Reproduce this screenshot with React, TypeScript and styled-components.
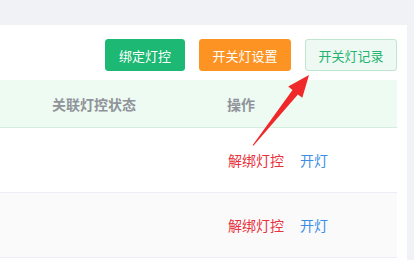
import styled, { createGlobalStyle } from "styled-components";

const GlobalStyle = createGlobalStyle`
  html, body {
    margin: 0;
    padding: 0;
    background: #f0f2f5;
    font-family: "Noto Sans CJK SC", "Noto Sans", sans-serif;
    overflow: hidden;
  }
`;

const Page = styled.div`
  position: relative;
  width: 414px;
  height: 260px;
  overflow: hidden;
`;

const Panel = styled.div`
  margin: 25px 7px 0 0;
  padding: 14px 10px 0 0;
  background: #fff;
  height: 235px;
  box-sizing: border-box;
`;

const Toolbar = styled.div`
  display: flex;
  justify-content: flex-end;
  gap: 14px;
  margin-bottom: 9px;
`;

const Button = styled.button<{ $variant: "green" | "orange" | "plain"; $w: number }>`
  width: ${(p) => p.$w}px;
  height: 32px;
  border-radius: 3px;
  font-family: inherit;
  font-size: 13px;
  padding: 0;
  cursor: pointer;
  box-sizing: border-box;
  background: ${(p) =>
    p.$variant === "green" ? "#1db873" : p.$variant === "orange" ? "#fd9323" : "#edf9f2"};
  color: ${(p) => (p.$variant === "plain" ? "#24b36f" : "#fff")};
  border: 1px solid
    ${(p) =>
      p.$variant === "green" ? "#1db873" : p.$variant === "orange" ? "#fd9323" : "#bfe6cf"};
`;

const Row = styled.div<{ $head?: boolean; $striped?: boolean }>`
  display: grid;
  grid-template-columns: 215px 1fr;
  align-items: center;
  height: ${(p) => (p.$head ? 47 : 64)}px;
  background: ${(p) => (p.$head ? "#edfbf2" : p.$striped ? "#fafafa" : "#fff")};
  border-bottom: 1px solid ${(p) => (p.$head ? "#d3eedd" : "#ebeef5")};
  font-size: 14px;
`;

const HeadCell = styled.div<{ $pad: number }>`
  padding-left: ${(p) => p.$pad}px;
  color: #909399;
  font-weight: 600;
`;

const Cell = styled.div<{ $pad: number }>`
  padding-left: ${(p) => p.$pad}px;
  display: flex;
  gap: 16px;
`;

const Link = styled.span<{ $danger?: boolean }>`
  color: ${(p) => (p.$danger ? "#e8323c" : "#3d8fe6")};
  cursor: pointer;
`;

const Arrow = styled.svg`
  position: absolute;
  left: 0;
  top: 0;
  pointer-events: none;
`;

const rows = [0, 1];

export default function App() {
  return (
    <Page>
      <GlobalStyle />
      <Panel>
        <Toolbar>
          <Button $variant="green" $w={80}>绑定灯控</Button>
          <Button $variant="orange" $w={92}>开关灯设置</Button>
          <Button $variant="plain" $w={92}>开关灯记录</Button>
        </Toolbar>
        <Row $head>
          <HeadCell $pad={52}>关联灯控状态</HeadCell>
          <HeadCell $pad={12}>操作</HeadCell>
        </Row>
        {rows.map((i) => (
          <Row key={i} $striped={i % 2 === 1}>
            <Cell $pad={52} />
            <Cell $pad={13}>
              <Link $danger>解绑灯控</Link>
              <Link>开灯</Link>
            </Cell>
          </Row>
        ))}
      </Panel>
      <Arrow width="414" height="260" viewBox="0 0 414 260">
        <polygon
          fill="#f0282a"
          points="252.6,145.3 292.5,90.0 288.2,86.6 309,75 302.3,97.8 297.9,94.4 253.4,145.7"
        />
      </Arrow>
    </Page>
  );
}
